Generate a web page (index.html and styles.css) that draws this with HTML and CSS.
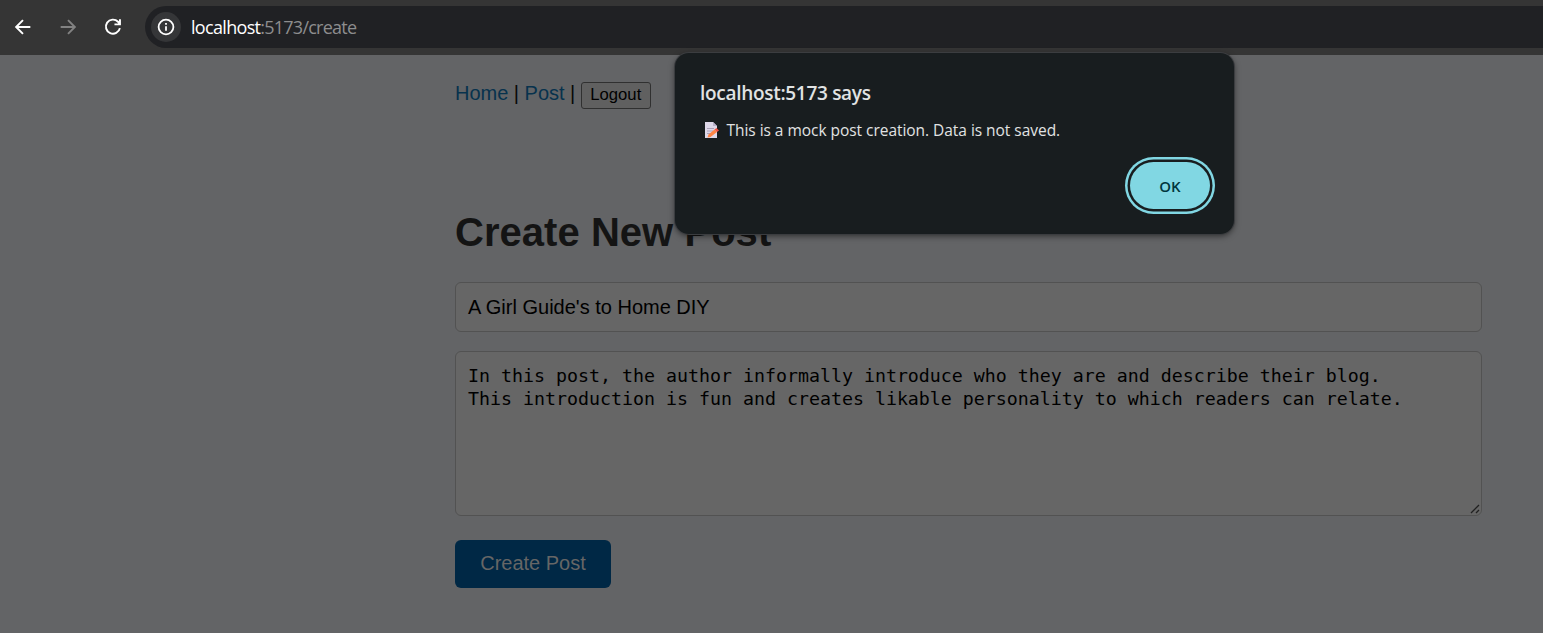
FILE: index.html
```html
<!DOCTYPE html>
<html lang="en">
<head>
<meta charset="utf-8">
<title>Create New Post</title>
<link rel="stylesheet" href="styles.css">
</head>
<body>
<header class="toolbar">
  <div class="nav-icons">
    <svg class="icon" viewBox="0 0 24 24"><path d="M20 12H5M12 4.500L4.500 12l7.500 7.500"/></svg>
    <svg class="icon icon-dim" viewBox="0 0 24 24"><path d="M4 12h15M12 4.500l7.500 7.500-7.500 7.500"/></svg>
    <svg class="icon" viewBox="0 0 24 24"><path d="M19.500 13.200A7.700 7.700 0 1 1 17.500 6.300L19.500 8.500M19.600 3.500V9.100H13.600"/></svg>
  </div>
  <div class="address">
    <span class="info"><svg viewBox="0 0 18 18"><circle cx="9" cy="9" r="7.400"/><path d="M9 8.200v4.500M9 5v1.800"/></svg></span>
    <span class="url"><span class="host">localhost</span>:5173/create</span>
  </div>
</header>
<main class="page">
  <nav class="links"><a>Home</a><span>|</span><a>Post</a><span>|</span><button class="logout">Logout</button></nav>
  <h1 class="title">Create New Post</h1>
  <div class="field">A Girl Guide's to Home DIY</div>
  <div class="field area">In this post, the author informally introduce who they are and describe their blog.<br>This introduction is fun and creates likable personality to which readers can relate.
    <svg class="grip" viewBox="0 0 10 10"><path d="M1 9L9 1M6 9l3-3"/></svg>
  </div>
  <button class="submit">Create Post</button>
</main>
<section class="dialog">
  <h2 class="dialog-title">localhost:5173 says</h2>
  <p class="message">
    <svg class="memo" viewBox="0 0 16 17"><path fill="#ddd7e8" d="M1 0h8l4 4v12H1z"/><path fill="#b9b0c9" d="M9 0l4 4H9z"/><path stroke="#aaa0b8" d="M3 6.500h7M3 9h6M3 11.500h4"/><path fill="#ff8444" d="M3.500 15.500l1-3 6-5 2.500 2.500-6.500 5z"/><path fill="#f45243" d="M10.500 7.500l2-1.500 2.500 2.500-2 1.500z"/></svg>
    <span>This is a mock post creation. Data is not saved.</span>
  </p>
  <button class="ok">OK</button>
</section>
</body>
</html>
```
FILE: styles.css
```css
* { box-sizing: border-box; }
body {
  margin: 0;
  height: 633px;
  overflow: hidden;
  background: #636466;
  font-family: "Liberation Sans", Arial, sans-serif;
  font-size: 20px;
}
button { font-family: inherit; margin: 0; }
.toolbar {
  display: flex;
  align-items: center;
  height: 55px;
  padding-bottom: 1px;
  background: #353535;
}
.nav-icons { display: flex; gap: 23px; padding-left: 12px; width: 145px; flex: none; }
.icon { width: 22px; height: 22px; fill: none; stroke: #fff; stroke-width: 2.1; }
.icon-dim { stroke: #828282; }
.address {
  display: flex;
  align-items: center;
  flex: 1;
  height: 42px;
  padding-left: 6px;
  border-radius: 21px 0 0 21px;
  background: #202124;
}
.info {
  display: flex;
  align-items: center;
  justify-content: center;
  width: 30px;
  height: 30px;
  margin-right: 10px;
  border-radius: 50%;
  background: #353638;
}
.info svg { width: 18px; height: 18px; fill: none; stroke: #fff; stroke-width: 1.8; }
.url { font: 18px/24px "Open Sans", sans-serif; letter-spacing: -0.76px; color: #8d8d8e; }
.host { color: #fff; letter-spacing: -0.68px; }
.page { display: flex; flex-direction: column; align-items: flex-start; width: 1482px; padding: 27px 0 0 455px; }
.links { display: flex; gap: 5.500px; height: 27px; line-height: 23px; color: #080808; }
.links a { color: #07324d; }
.logout {
  width: 70px;
  height: 27px;
  padding: 0 0 2px;
  border: 1px solid #303030;
  border-radius: 3px;
  background: #606060;
  font-size: 16.67px;
  color: #000;
}
.title { margin: 99px 0 0; font-size: 40px; line-height: 48px; letter-spacing: 0.04px; color: #141414; }
.field {
  width: 1027px;
  height: 50px;
  margin-top: 26px;
  padding: 12px;
  border: 1px solid #525252;
  border-radius: 6px;
  background: #666;
  line-height: 24px;
  color: #000;
}
.area {
  position: relative;
  height: 165px;
  margin-top: 19px;
  font-family: "DejaVu Sans Mono", monospace;
  font-size: 18.270px;
  line-height: 23px;
  white-space: nowrap;
}
.grip { position: absolute; right: 1px; bottom: 1px; width: 10px; height: 10px; fill: none; stroke: #202020; stroke-width: 1.300; }
.submit {
  width: 156px;
  height: 48px;
  margin-top: 24px;
  padding: 0 0 1px;
  border: 0;
  border-radius: 6px;
  background: #002845;
  font-size: 20px;
  color: #666;
}
.dialog {
  position: absolute;
  left: 675px;
  top: 53px;
  display: flex;
  flex-direction: column;
  width: 559px;
  height: 181px;
  padding: 27px 24px 0 25px;
  border-radius: 14px;
  background: #181d1f;
  box-shadow: 0 0 0 1px #3b3d40, 0 2px 6px rgba(0, 0, 0, .55);
  font-family: "Open Sans", sans-serif;
  color: #e1e3e3;
}
.dialog-title { margin: 0; font-size: 19px; line-height: 26px; font-weight: 600; letter-spacing: -0.3px; }
.message { display: flex; align-items: center; gap: 7px; margin: 13px 0 0; padding-left: 4px; font-size: 15.500px; line-height: 23px; letter-spacing: -0.04px; white-space: nowrap; }
.message span { margin-left: -0.5px; }
.memo { width: 16px; height: 17px; }
.ok {
  align-self: flex-end;
  width: 80px;
  height: 47px;
  margin-top: 20px;
  padding: 0;
  border: 0;
  border-radius: 24px;
  background: #81d7e3;
  box-shadow: 0 0 0 2.500px #181d1f, 0 0 0 5px #81d7e3;
  font-size: 15px;
  font-weight: 600;
  color: #00363d;
}
```
